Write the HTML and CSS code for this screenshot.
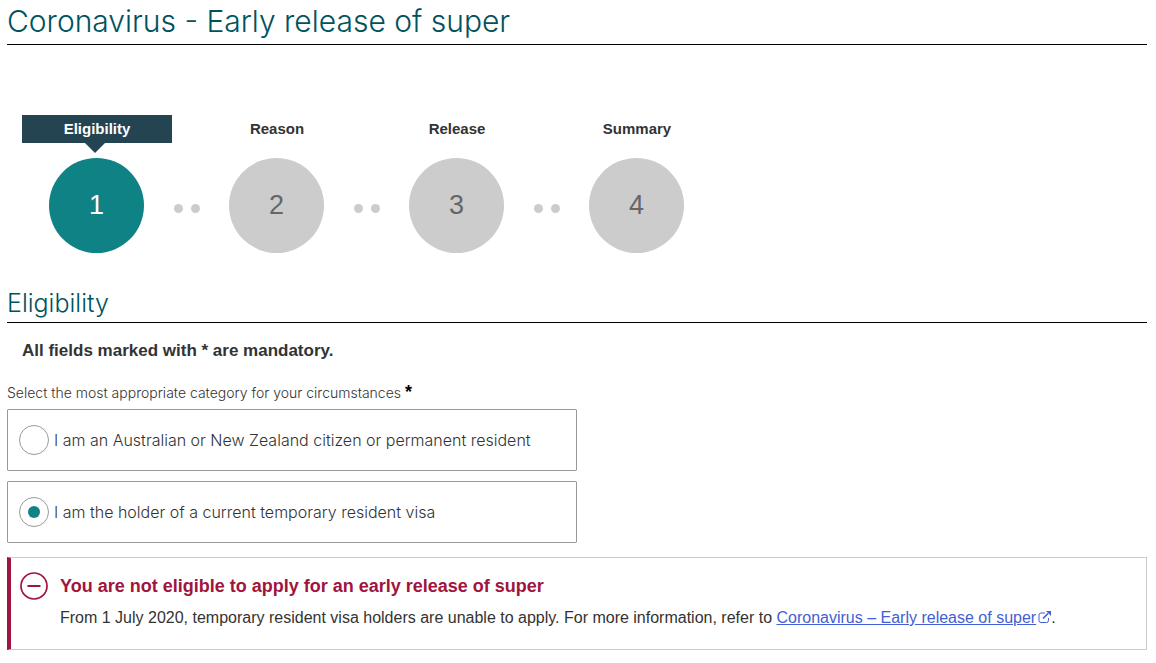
FILE: index.html
```html
<!DOCTYPE html>
<html lang="en">
<head>
<meta charset="utf-8">
<meta name="viewport" content="width=device-width, initial-scale=1">
<title>Coronavirus - Early release of super</title>
<link rel="stylesheet" href="styles.css">
</head>
<body>
<main class="page">
  <h1 class="page-title">Coronavirus - Early release of super</h1>

  <ol class="steps">
    <li class="step step-current" aria-current="step">
      <span class="step-label">Eligibility</span>
      <span class="step-number">1</span>
    </li>
    <li class="step-dots" aria-hidden="true"><span class="dot"></span><span class="dot"></span></li>
    <li class="step">
      <span class="step-label">Reason</span>
      <span class="step-number">2</span>
    </li>
    <li class="step-dots" aria-hidden="true"><span class="dot"></span><span class="dot"></span></li>
    <li class="step">
      <span class="step-label">Release</span>
      <span class="step-number">3</span>
    </li>
    <li class="step-dots" aria-hidden="true"><span class="dot"></span><span class="dot"></span></li>
    <li class="step">
      <span class="step-label">Summary</span>
      <span class="step-number">4</span>
    </li>
  </ol>

  <h2 class="section-title">Eligibility</h2>
  <p class="mandatory">All fields marked with * are mandatory.</p>

  <form>
    <fieldset class="question">
      <legend class="question-label">Select the most appropriate category for your circumstances <span class="required">*</span></legend>
      <div class="options">
        <label class="option" for="citizen">
          <input class="radio" type="radio" id="citizen" name="category">
          <span>I am an Australian or New Zealand citizen or permanent resident</span>
        </label>
        <label class="option" for="visa">
          <input class="radio" type="radio" id="visa" name="category" checked>
          <span>I am the holder of a current temporary resident visa</span>
        </label>
      </div>
    </fieldset>
  </form>

  <section class="alert" role="alert">
    <svg class="alert-icon" width="28" height="28" viewBox="0 0 28 28" aria-hidden="true">
      <circle cx="14" cy="14" r="13" fill="none" stroke="#a0153e" stroke-width="1.7"/>
      <path d="M7.500 14h13" stroke="#a0153e" stroke-width="2"/>
    </svg>
    <div class="alert-body">
      <h3 class="alert-title">You are not eligible to apply for an early release of super</h3>
      <p class="alert-text">From 1 July 2020, temporary resident visa holders are unable to apply. For more information, refer to <a class="link" href="#">Coronavirus – Early release of super</a><svg class="external" width="13" height="12" viewBox="0 0 13 12" aria-hidden="true"><path d="M7 2H3Q1 2 1 4v5.500q0 2 2 2h5.500q2 0 2-2V7" fill="none" stroke="#4360d3"/><path d="M5 7.500l5-5" fill="none" stroke="#4360d3" stroke-width="1.700"/><path d="M8 0h5v5z" fill="#4360d3"/></svg>.</p>
    </div>
  </section>
</main>
</body>
</html>
```
FILE: styles.css
```css
* {
  box-sizing: border-box;
}

body {
  margin: 0;
  background: #fff;
  color: #333;
  font-family: "Liberation Sans", Arial, sans-serif;
  font-size: 16px;
}

.page {
  padding: 0 9px 12px 7px;
}

.page-title,
.section-title {
  margin: 0;
  border-bottom: 1px solid #000;
  color: #00525e;
  font-family: Inter, "Liberation Sans", sans-serif;
  font-weight: 300;
}

.page-title {
  padding-bottom: 2px;
  font-size: 30px;
  line-height: 42px;
}

.steps {
  display: flex;
  flex-wrap: wrap;
  margin: 70px 0 0;
  padding: 0 15px;
  list-style: none;
}

.step {
  display: flex;
  flex-direction: column;
  gap: 15px;
  width: 150px;
}

.step-label {
  position: relative;
  font-size: 15px;
  font-weight: 700;
  line-height: 28px;
  text-align: center;
}

.step-number {
  width: 95px;
  height: 95px;
  margin-left: 27px;
  border-radius: 50%;
  background: #ccc;
  color: #666;
  font-size: 27px;
  line-height: 95px;
  text-align: center;
}

.step-current .step-label {
  background: #254452;
  color: #fff;
}

.step-current .step-label::after {
  content: "";
  position: absolute;
  top: 100%;
  left: 50%;
  margin-left: -12px;
  border: 10px solid transparent;
  border-top-color: #254452;
  border-bottom: 0;
}

.step-current .step-number {
  background: #0f8286;
  color: #fff;
}

.step-dots {
  display: flex;
  justify-content: center;
  gap: 8px;
  width: 30px;
  padding-top: 89px;
}

.dot {
  width: 9px;
  height: 9px;
  border-radius: 50%;
  background: #ccc;
}

.section-title {
  margin-top: 34px;
  padding-bottom: 3px;
  font-size: 25px;
  line-height: 32px;
}

.mandatory {
  margin: 16px 15px 0;
  font-size: 17px;
  font-weight: 700;
  line-height: 24px;
}

.question {
  min-width: 0;
  margin: 18px 0 0;
  padding: 0;
  border: 0;
  font-family: Inter, "Liberation Sans", sans-serif;
  font-weight: 300;
}

.question-label {
  padding: 0;
  font-size: 14px;
  line-height: 22px;
}

.required {
  color: #000;
  font-family: "Liberation Sans", Arial, sans-serif;
  font-size: 18px;
  font-weight: 700;
}

.options {
  display: grid;
  gap: 10px;
  max-width: 570px;
  margin-top: 5px;
}

.option {
  display: flex;
  align-items: center;
  gap: 5px;
  min-height: 62px;
  padding: 0 11px;
  border: 1px solid #999;
  border-radius: 1px;
}

.radio {
  appearance: none;
  display: grid;
  place-content: center;
  flex: none;
  width: 30px;
  height: 30px;
  margin: 0;
  border: 1px solid #999;
  border-radius: 50%;
  background: #fff;
}

.radio:checked::before {
  content: "";
  width: 12px;
  height: 12px;
  border-radius: 50%;
  background: #0f8286;
}

.alert {
  display: flex;
  gap: 12px;
  margin-top: 14px;
  padding: 14px 9px 17px;
  border: 1px solid #ccc;
  border-left: 4px solid #a0153e;
}

.alert-icon {
  flex: none;
}

.alert-title {
  margin: 0;
  color: #a0153e;
  font-size: 18px;
  font-weight: 700;
  line-height: 28px;
}

.alert-text {
  margin: 4px 0 0;
  line-height: 28px;
}

.link {
  color: #4360d3;
}

.external {
  margin-left: 2px;
}
```
